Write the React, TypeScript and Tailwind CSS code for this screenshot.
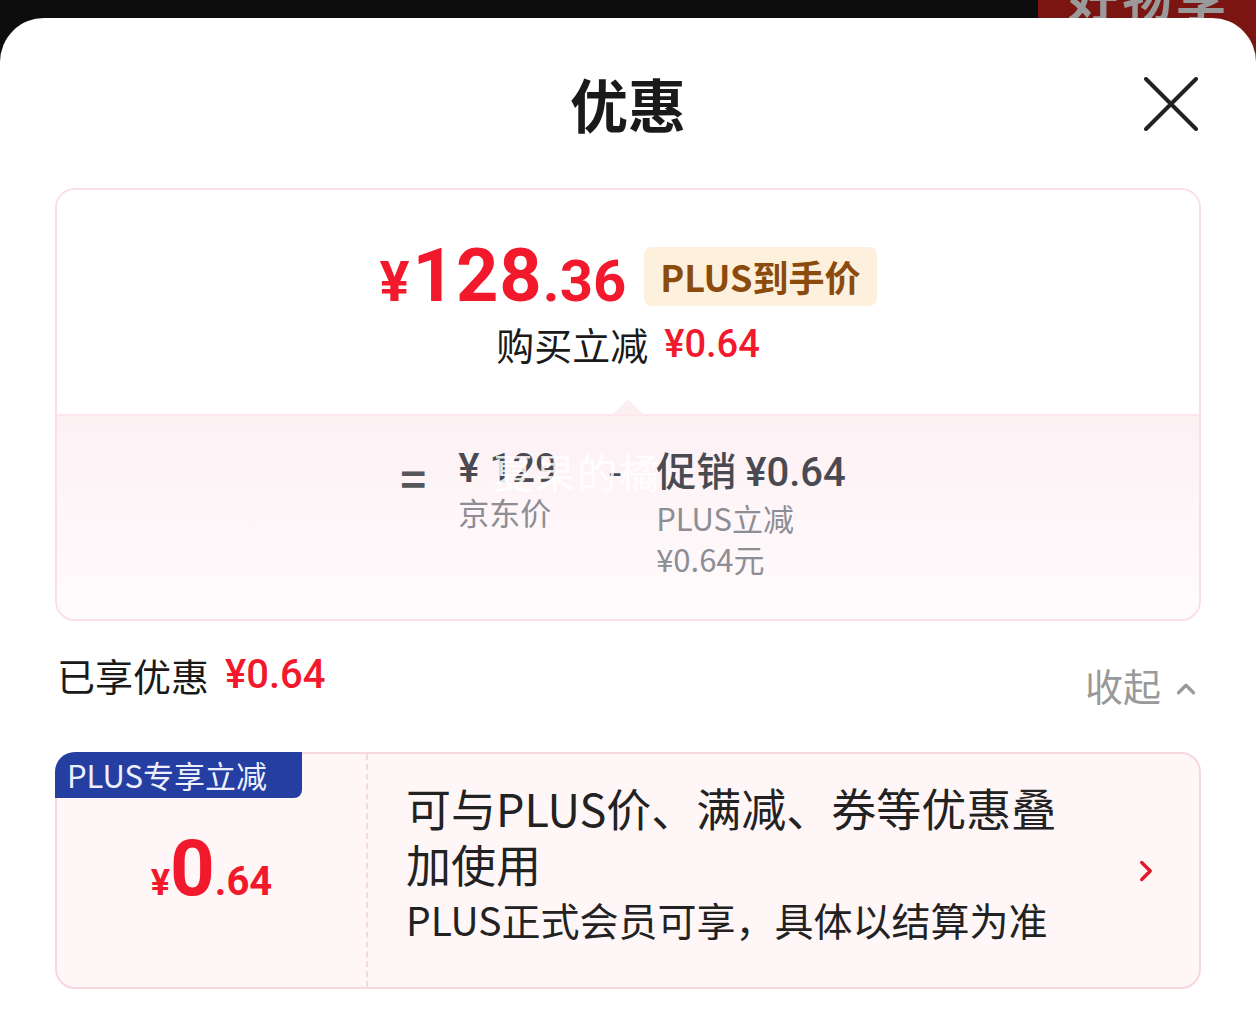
import { ChevronRight, ChevronUp } from "lucide-react";

const cjk = "font-['Noto_Sans_CJK_SC','Noto_Sans',sans-serif]";
const num = "font-['Roboto','Noto_Sans_CJK_SC',sans-serif]";

function CloseIcon() {
  return (
    <svg width="54" height="54" viewBox="0 0 54 54" fill="none">
      <path d="M2 2 L52 52 M52 2 L2 52" stroke="#222" strokeWidth="4" strokeLinecap="round" />
    </svg>
  );
}

function PriceSummary() {
  return (
    <div className="mx-[55px] rounded-[20px] border-2 border-[#fbdfe5] overflow-hidden">
      <div className="h-[224px] bg-white flex flex-col items-center pt-[56px] relative">
        <div className="flex items-center gap-[18px] h-[60px]">
          <div className={`${num} font-bold text-[#f2192c] flex items-baseline leading-none`}>
            <span className="text-[56px] mr-[3px]">¥</span>
            <span className="text-[74px] tracking-[1px]">128</span>
            <span className="text-[58px]">.36</span>
          </div>
          <div className={`${cjk} h-[59px] px-[16px] rounded-[8px] bg-[#fdf0dc] text-[#8a4b0c] text-[36px] font-bold flex items-center`}>
            PLUS到手价
          </div>
        </div>
        <div className={`${cjk} mt-[16px] text-[38px] leading-[44px] text-[#1a1a1a] flex items-center gap-[16px]`}>
          <span>购买立减</span>
          <span className={`${num} font-medium text-[#f2192c]`}>¥0.64</span>
        </div>
        <div className="absolute bottom-0 left-1/2 -translate-x-1/2 w-0 h-0 border-l-[15px] border-r-[15px] border-b-[15px] border-l-transparent border-r-transparent border-b-[#fdeef1]" />
      </div>
      <div className="h-[205px] border-t-2 border-[#fde7ec] bg-gradient-to-b from-[#fdf1f4] to-[#fffbfc] relative">
        <div className={`${cjk} flex justify-center items-start pt-[30px] pr-[10px]`}>
          <div className="text-[44px] leading-[50px] font-bold text-[#55555c] mt-[6px]">=</div>
          <div className="ml-[32px] w-[150px] flex flex-col">
            <span className={`${num} text-[40px] leading-[46px] font-medium text-[#4a4a52]`}>¥ 129</span>
            <span className="text-[31px] leading-[40px] text-[#8d8d95]">京东价</span>
          </div>
          <div className="text-[40px] leading-[46px] text-[#4a4a52]">-</div>
          <div className="ml-[34px] flex flex-col">
            <span className="text-[40px] leading-[46px] font-medium text-[#4a4a52]">
              促销 <span className={`${num}`}>¥0.64</span>
            </span>
            <span className="text-[31px] leading-[44px] text-[#8d8d95]">PLUS立减</span>
            <span className="text-[31px] leading-[38px] text-[#8d8d95]">¥0.64元</span>
          </div>
        </div>
        <div className={`${cjk} absolute left-[436px] top-[30px] text-[40px] leading-[50px] text-white/85 tracking-[2px]`}>
          夏果的橘
        </div>
      </div>
    </div>
  );
}

function CouponCard() {
  return (
    <div className="mx-[55px] mt-[38px] h-[237px] rounded-[20px] border-2 border-[#f8d8df] bg-[#fff6f7] flex relative">
      <div className={`${cjk} absolute -left-[2px] -top-[2px] h-[46px] w-[247px] rounded-tl-[20px] rounded-br-[8px] bg-[#243ea1] text-[#eef0ff] text-[31px] flex items-center pl-[12px]`}>
        PLUS专享立减
      </div>
      <div className="w-[311px] shrink-0 border-r-2 border-dashed border-[#f3dadf] flex items-center justify-center pb-[4px]">
        <div className={`${num} font-bold text-[#f2192c] flex items-baseline leading-none`}>
          <span className="text-[36px]">¥</span>
          <span className="text-[78px]">0</span>
          <span className="text-[40px]">.64</span>
        </div>
      </div>
      <div className={`${cjk} flex-1 flex items-center pl-[38px] pr-[40px]`}>
        <div className="flex-1 pb-[16px]">
          <div className="text-[45px] leading-[56px] text-[#222] w-[690px]">可与PLUS价、满减、券等优惠叠加使用</div>
          <div className="text-[39px] leading-[54px] text-[#222]">PLUS正式会员可享，具体以结算为准</div>
        </div>
        <ChevronRight size={34} strokeWidth={2.4} className="text-[#e01a2a] -mr-[4px]" />
      </div>
    </div>
  );
}

export default function App() {
  return (
    <div className="w-[1256px] h-[1036px] bg-[#0d0d0d] relative overflow-hidden">
      <div className="absolute right-0 top-0 w-[218px] h-[70px] bg-[#7a1512] rounded-bl-[30px] overflow-hidden">
        <div className={`${cjk} text-[50px] font-bold leading-none text-[#9a9a9a] -mt-[30px] pl-[30px] tracking-[4px]`}>
          好物享
        </div>
      </div>
      <div className="relative mt-[18px] h-[1018px] bg-white rounded-t-[44px]">
        <div className="relative h-[170px] flex justify-center pt-[52px]">
          <h1 className={`${cjk} text-[58px] leading-[66px] font-bold text-[#1a1a1a]`}>优惠</h1>
          <div className="absolute right-[58px] top-[59px]">
            <CloseIcon />
          </div>
        </div>
        <PriceSummary />
        <div className={`${cjk} mx-[57px] mt-[18px] h-[75px] flex justify-between items-start`}>
          <div className="flex items-center gap-[16px] text-[38px] leading-[72px]">
            <span className="text-[#1a1a1a]">已享优惠</span>
            <span className={`${num} font-medium text-[#f2192c] text-[40px]`}>¥0.64</span>
          </div>
          <div className="flex items-center gap-[10px] mt-[10px] text-[38px] leading-[72px] text-[#999]">
            <span>收起</span>
            <ChevronUp size={30} strokeWidth={2.6} className="mt-[8px] -mr-[2px]" />
          </div>
        </div>
        <CouponCard />
      </div>
    </div>
  );
}
